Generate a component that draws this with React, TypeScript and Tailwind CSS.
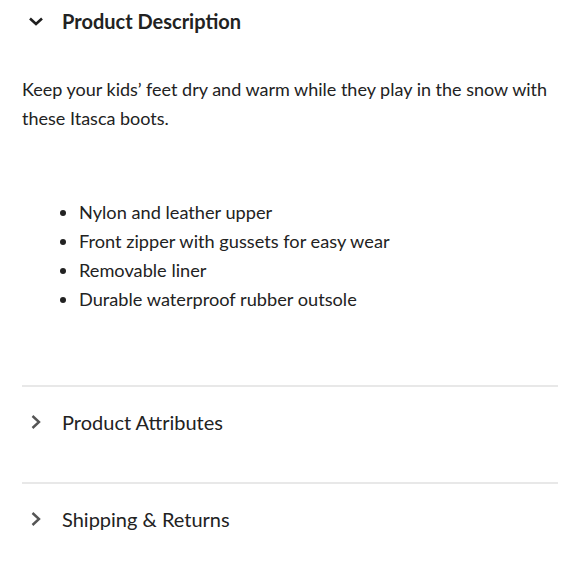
const ChevronDown = () => (
  <svg width="16" height="16" viewBox="0 0 16 16" fill="none" className="shrink-0">
    <path d="M2 5.5 L8 11 L14 5.5" stroke="#1f1f1f" strokeWidth="2.6" />
  </svg>
);

const ChevronRight = () => (
  <svg width="16" height="16" viewBox="0 0 16 16" fill="none" className="shrink-0">
    <path d="M4.5 2 L11 8 L4.5 14" stroke="#555" strokeWidth="2.4" />
  </svg>
);

const bullets = [
  "Nylon and leather upper",
  "Front zipper with gussets for easy wear",
  "Removable liner",
  "Durable waterproof rubber outsole",
];

const Section = ({ title }: { title: string }) => (
  <div className="border-t-2 border-[#e8e8e8]">
    <button className="flex w-full items-center gap-[18px] pl-[6px] pt-[24px] pb-[49px] text-left">
      <ChevronRight />
      <span className="text-[20px] leading-[22px] text-[#222]">{title}</span>
    </button>
  </div>
);

export default function App() {
  return (
    <div
      className="min-h-[580px] bg-white px-[22px] text-[#222]"
      style={{ fontFamily: "Lato, 'Open Sans', sans-serif" }}
    >
      <div>
        <button className="flex w-full items-center gap-[18px] pl-[6px] pt-[10px] text-left">
          <ChevronDown />
          <span className="text-[20px] font-bold leading-[22px]">Product Description</span>
        </button>
        <div className="pt-[43px] pb-[71px]">
          <p className="text-[18px] leading-[29px]">
            Keep your kids’ feet dry and warm while they play in the snow with these Itasca boots.
          </p>
          <ul className="mt-[65px] list-disc pl-[57px] text-[18.2px] leading-[29px]">
            {bullets.map((b) => (
              <li key={b}>{b}</li>
            ))}
          </ul>
        </div>
      </div>
      <Section title="Product Attributes" />
      <Section title="Shipping & Returns" />
    </div>
  );
}
